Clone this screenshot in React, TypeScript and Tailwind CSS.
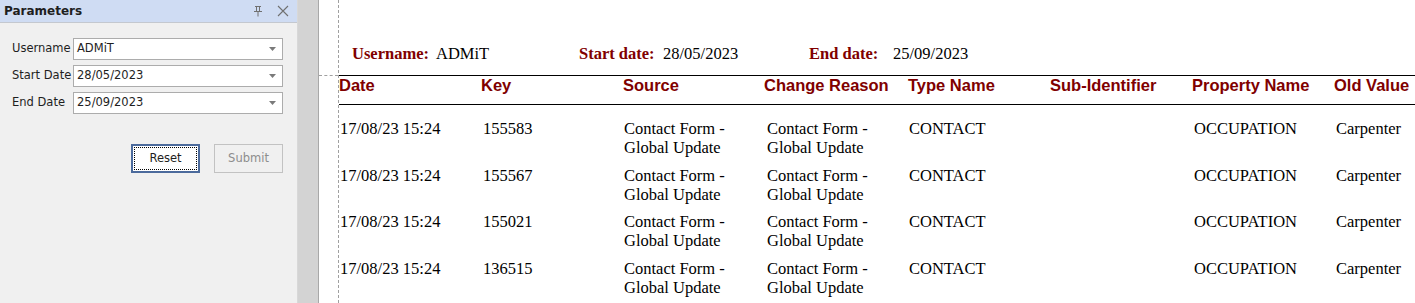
import React from "react";

const rows = [
  { date: "17/08/23 15:24", key: "155583" },
  { date: "17/08/23 15:24", key: "155567" },
  { date: "17/08/23 15:24", key: "155021" },
  { date: "17/08/23 15:24", key: "136515" },
];

const headers = [
  "Date",
  "Key",
  "Source",
  "Change Reason",
  "Type Name",
  "Sub-Identifier",
  "Property Name",
  "Old Value",
];

function Arrow() {
  return (
    <svg width="7" height="4" viewBox="0 0 7 4" className="shrink-0">
      <path d="M0 0 H7 L3.5 4 Z" fill="#7a7a7a" />
    </svg>
  );
}

function Field({ label, value }: { label: string; value: string }) {
  return (
    <div className="flex h-[22px] items-center">
      <span className="w-[61px] shrink-0 text-[11.5px] text-[#1e1e1e]">{label}</span>
      <div className="flex h-[22px] flex-1 items-center border border-[#acacac] bg-white pl-[3px] pr-[6px]">
        <span className="flex-1 text-[11.5px] text-[#1e1e1e]">{value}</span>
        <Arrow />
      </div>
    </div>
  );
}

export default function App() {
  return (
    <div className="flex h-[303px] w-[1415px] overflow-hidden bg-white">
      <aside className="flex w-[297px] shrink-0 flex-col bg-[#f0f0f0] font-['DejaVu_Sans',sans-serif]">
        <div className="flex h-[23px] items-center border-b border-[#c4c8cf] bg-[#cfdcf3] pl-[4px] pr-[8px]">
          <span className="text-[12px] font-bold text-[#1e1e1e]">Parameters</span>
          <div className="ml-auto flex items-center gap-[14px]">
            <svg width="10" height="12" viewBox="0 0 10 12" fill="none" stroke="#707070" strokeWidth="1">
              <path d="M2 1.5 H8 M3.5 1.5 V6.5 M6.5 1.5 V6.5 M1 6.5 H9 M5 6.5 V11.5" />
            </svg>
            <svg width="12" height="12" viewBox="0 0 12 12" fill="none" stroke="#707070" strokeWidth="1.1">
              <path d="M1 1 L11 11 M11 1 L1 11" />
            </svg>
          </div>
        </div>
        <div className="flex flex-col gap-[5px] pl-[12px] pr-[14px] pt-[15px]">
          <Field label="Username" value="ADMiT" />
          <Field label="Start Date" value="28/05/2023" />
          <Field label="End Date" value="25/09/2023" />
        </div>
        <div className="mt-[30px] flex justify-end gap-[14px] pr-[14px]">
          <button className="h-[29px] w-[69px] border-2 border-[#4b6a9c] bg-white p-[1px]">
            <div className="flex h-full items-center justify-center border border-dotted border-black text-[11.5px] text-[#1e1e1e]">
              Reset
            </div>
          </button>
          <button className="flex h-[29px] w-[69px] items-center justify-center border border-[#c2c2c2] bg-[#f0f0f0] text-[11.5px] text-[#8d8d8d]">
            Submit
          </button>
        </div>
      </aside>
      <div className="w-[22px] shrink-0 border-l border-r border-l-[#d8d8d8] border-r-[#a8a8a8] bg-[#d3d3d3]" />
      <main className="flex min-w-0 flex-1">
        <div className="w-[19px] shrink-0">
          <div className="h-[75px]" />
          <div className="border-t border-dashed border-[#a0a0a0]" />
        </div>
        <div className="min-w-0 flex-1 overflow-hidden border-l border-dashed border-[#a0a0a0] font-['Liberation_Serif',serif] text-[16.5px] leading-[19px]">
          <div className="flex h-[75px] pl-[13px] pt-[44px]">
            <div className="flex w-[227px] shrink-0">
              <span className="w-[84px] shrink-0 whitespace-nowrap font-bold text-[#800000]">Username:</span>
              <span className="text-black">ADMiT</span>
            </div>
            <div className="flex w-[230px] shrink-0">
              <span className="w-[84px] shrink-0 whitespace-nowrap font-bold text-[#800000]">Start date:</span>
              <span className="text-black">28/05/2023</span>
            </div>
            <div className="flex shrink-0">
              <span className="w-[84px] shrink-0 whitespace-nowrap font-bold text-[#800000]">End date:</span>
              <span className="text-black">25/09/2023</span>
            </div>
          </div>
          <div className="w-[1160px]">
            <div className="grid grid-cols-[142px_142px_141px_144px_142px_142px_142px_142px] border-b border-t border-black pb-[9px] font-['Liberation_Sans',sans-serif] font-bold text-[#800000]">
              {headers.map((h) => (
                <div key={h} className="whitespace-nowrap">
                  {h}
                </div>
              ))}
            </div>
            <div className="pt-[14px]">
              {rows.map((r) => (
                <div
                  key={r.key}
                  className="grid h-[46.7px] grid-cols-[142px_142px_141px_144px_142px_142px_142px_142px] text-black"
                >
                  <div className="pl-[1px] whitespace-nowrap">{r.date}</div>
                  <div className="pl-[2px]">{r.key}</div>
                  <div className="pl-[1px] pr-[8px]">Contact Form - Global Update</div>
                  <div className="pl-[3px] pr-[8px]">Contact Form - Global Update</div>
                  <div className="pl-[1px]">CONTACT</div>
                  <div />
                  <div className="pl-[2px]">OCCUPATION</div>
                  <div className="pl-[2px]">Carpenter</div>
                </div>
              ))}
            </div>
          </div>
        </div>
      </main>
    </div>
  );
}
